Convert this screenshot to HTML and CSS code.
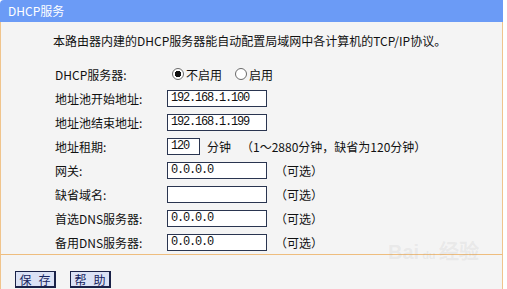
FILE: index.html
```html
<!DOCTYPE html>
<html lang="zh-CN">

<head>
    <meta charset="UTF-8">
    <title>DHCP服务</title>
    <link rel="stylesheet" href="styles.css">
</head>

<body>

    <div id="dhcp-page">

        <div class="title-bar">DHCP服务</div>

        <div class="panel">
            <p class="intro">本路由器内建的DHCP服务器能自动配置局域网中各计算机的TCP/IP协议。</p>

            <!-- DHCP settings -->
            <form id="dhcp-form" class="settings">
                <label class="field-label">DHCP服务器:</label>
                <div class="field">
                    <input type="radio" name="dhcp" id="dhcp-off" checked>
                    <label for="dhcp-off" class="radio-text">不启用</label>
                    <input type="radio" name="dhcp" id="dhcp-on">
                    <label for="dhcp-on" class="radio-text">启用</label>
                </div>

                <label class="field-label">地址池开始地址:</label>
                <div class="field"><input type="text" class="text-box" value="192.168.1.100"></div>

                <label class="field-label">地址池结束地址:</label>
                <div class="field"><input type="text" class="text-box" value="192.168.1.199"></div>

                <label class="field-label">地址租期:</label>
                <div class="field">
                    <input type="text" class="text-box short" value="120">
                    <span class="unit">分钟</span>
                    <span class="note">（1～2880分钟，缺省为120分钟）</span>
                </div>

                <label class="field-label">网关:</label>
                <div class="field">
                    <input type="text" class="text-box" value="0.0.0.0">
                    <span class="optional">（可选）</span>
                </div>

                <label class="field-label">缺省域名:</label>
                <div class="field">
                    <input type="text" class="text-box" value="">
                    <span class="optional">（可选）</span>
                </div>

                <label class="field-label">首选DNS服务器:</label>
                <div class="field">
                    <input type="text" class="text-box" value="0.0.0.0">
                    <span class="optional">（可选）</span>
                </div>

                <label class="field-label">备用DNS服务器:</label>
                <div class="field">
                    <input type="text" class="text-box" value="0.0.0.0">
                    <span class="optional">（可选）</span>
                </div>
            </form>
        </div>

        <div class="actions">
            <button type="button" class="btn"><span>保</span><span>存</span></button>
            <button type="button" class="btn"><span>帮</span><span>助</span></button>
        </div>

        <div class="watermark">Bai<span class="paw">du</span>经验</div>
    </div>

</body>

</html>
```

FILE: styles.css
```css
body {
    margin: 0;
    background-color: white;
    font-family: "Noto Sans CJK SC", sans-serif;
    font-size: 12px;
    color: #111;
}

#dhcp-page {
    position: relative;
    width: 503px;
    height: 289px;
    display: flex;
    flex-direction: column;
}

.title-bar {
    height: 22px;
    line-height: 22px;
    padding-left: 8px;
    background-color: #6b9bf6;
    color: white;
    border-top-left-radius: 4px;
}

.panel {
    background-color: #f4f4f4;
    border-left: 1px solid #f0c48c;
    border-right: 1px solid #f0c48c;
    border-bottom: 1px solid #eebd7e;
    padding: 12px 0 0 52px;
}

.intro {
    margin: 0 0 14px 0;
    line-height: 14px;
}

.settings {
    display: grid;
    grid-template-columns: 112px auto;
    grid-auto-rows: 24px;
    align-items: center;
    margin-left: 2px;
}

.field {
    display: flex;
    align-items: center;
}

input[type="radio"] {
    appearance: none;
    width: 12px;
    height: 12px;
    margin: 0 2px 0 5px;
    border: 1px solid #6a6a6a;
    border-radius: 50%;
    background: white;
}

input[type="radio"]:checked {
    background: radial-gradient(circle, #111 0 3px, white 3.5px);
}

.radio-text {
    margin-right: 8px;
}

.text-box {
    width: 100px;
    height: 17px;
    box-sizing: border-box;
    margin: 0;
    padding: 0 0 0 3px;
    border: 1px solid #2a3550;
    background: white;
    font-family: "Liberation Mono", monospace;
    font-size: 12px;
    letter-spacing: -1.2px;
    color: #111;
}

.text-box.short {
    width: 33px;
}

.unit {
    margin-left: 7px;
}

.note {
    margin-left: 10px;
}

.optional {
    margin-left: 8px;
}

.actions {
    flex: 1;
    background-color: #f4f4f4;
    border-left: 1px solid #f0c48c;
    border-right: 1px solid #f0c48c;
    padding: 16px 0 0 14px;
    display: flex;
    align-items: flex-start;
    gap: 14px;
}

.btn {
    width: 41px;
    height: 17px;
    padding: 0;
    display: flex;
    align-items: center;
    justify-content: center;
    gap: 7px;
    background-color: #dbe2f5;
    color: #16245e;
    border: 1px solid #1a2248;
    border-right-width: 2px;
    border-bottom-width: 2px;
    font-family: "Noto Sans CJK SC", sans-serif;
    font-size: 12px;
    line-height: 13px;
}

.watermark {
    position: absolute;
    left: 388px;
    top: 236px;
    color: rgba(160, 160, 160, 0.15);
    font-family: "Liberation Sans", sans-serif;
    font-size: 20px;
    font-weight: bold;
}

.paw {
    font-size: 11px;
    margin: 0 3px;
}
```
